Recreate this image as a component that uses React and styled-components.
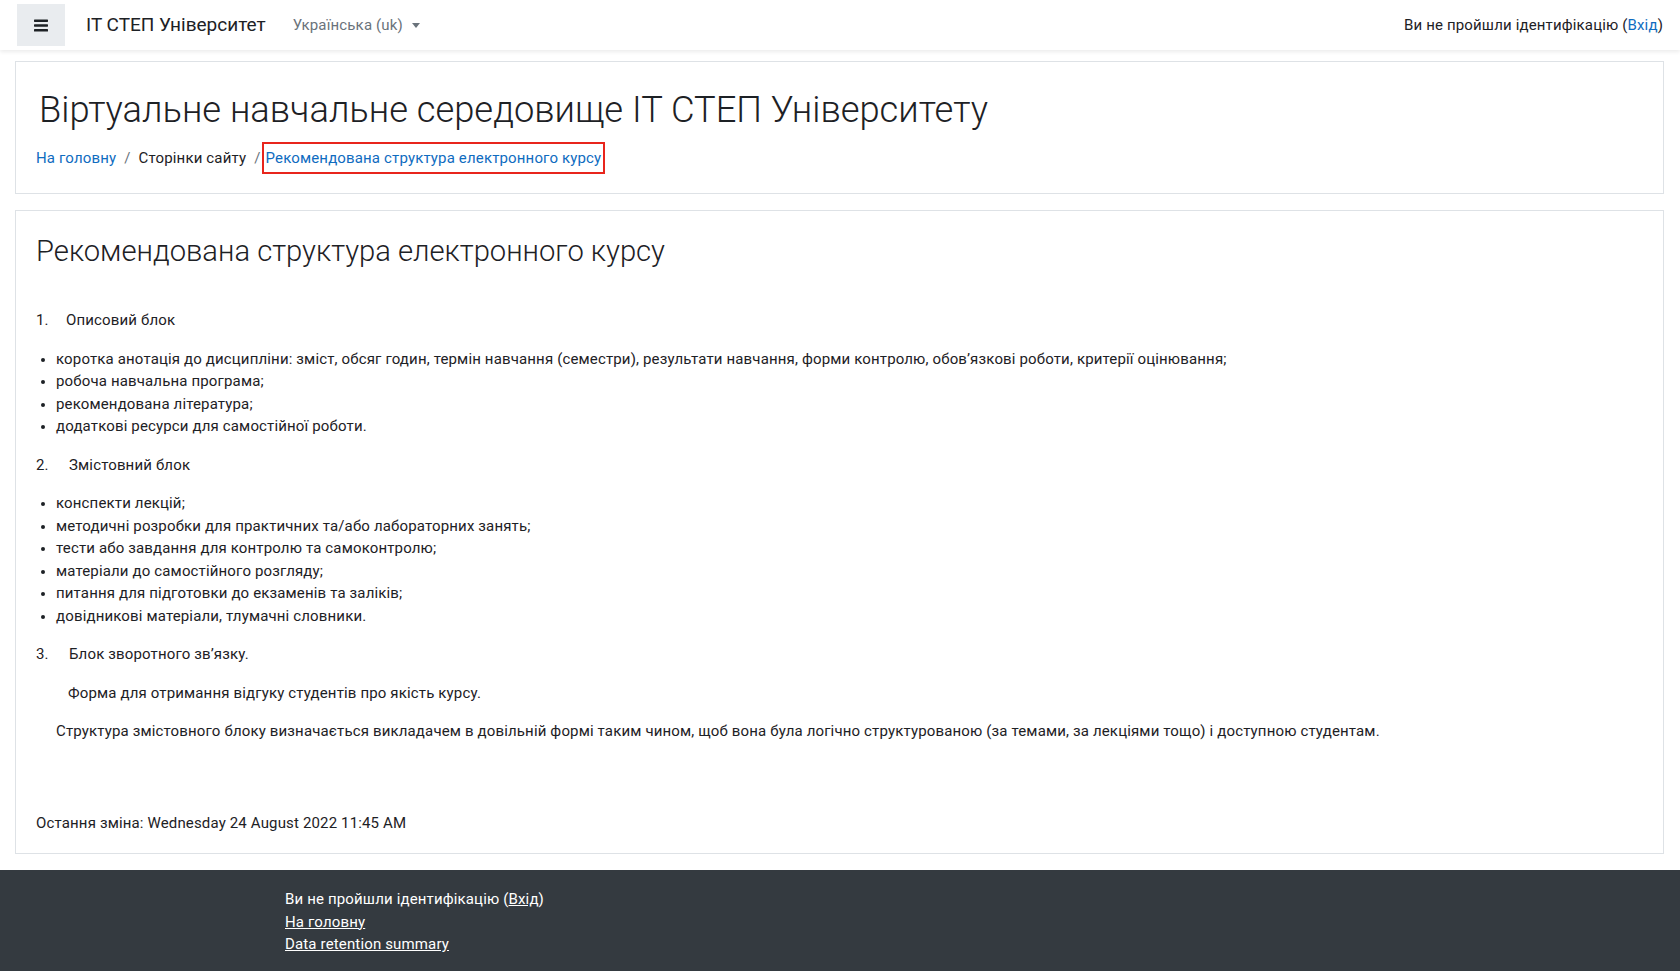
import React from "react";
import styled, { createGlobalStyle } from "styled-components";

const GlobalStyle = createGlobalStyle`
  body {
    margin: 0;
    padding: 0;
    background: #fff;
    font-family: Roboto, "Liberation Sans", sans-serif;
    font-size: 15px;
    line-height: 1.5;
    letter-spacing: 0.15px;
    color: #1d2125;
  }
`;

const bullets1 = [
  "коротка анотація до дисципліни: зміст, обсяг годин, термін навчання (семестри), результати навчання, форми контролю, обов’язкові роботи, критерії оцінювання;",
  "робоча навчальна програма;",
  "рекомендована література;",
  "додаткові ресурси для самостійної роботи.",
];

const bullets2 = [
  "конспекти лекцій;",
  "методичні розробки для практичних та/або лабораторних занять;",
  "тести або завдання для контролю та самоконтролю;",
  "матеріали до самостійного розгляду;",
  "питання для підготовки до екзаменів та заліків;",
  "довідникові матеріали, тлумачні словники.",
];

const BarsIcon = () => (
  <svg width="14" height="13" viewBox="0 0 14 13">
    <rect x="0" y="0.5" width="14" height="2.4" rx="0.6" fill="#1d2125" />
    <rect x="0" y="5.3" width="14" height="2.4" rx="0.6" fill="#1d2125" />
    <rect x="0" y="10.1" width="14" height="2.4" rx="0.6" fill="#1d2125" />
  </svg>
);

export default function App() {
  return (
    <>
      <GlobalStyle />
      <Navbar>
        <MenuButton>
          <BarsIcon />
        </MenuButton>
        <Brand>ІТ СТЕП Університет</Brand>
        <LangMenu>
          Українська (uk)
          <Caret />
        </LangMenu>
        <Spacer />
        <LoginInfo>
          Ви не пройшли ідентифікацію (<Link href="#">Вхід</Link>)
        </LoginInfo>
      </Navbar>

      <Page>
        <Card>
          <PageTitle>Віртуальне навчальне середовище ІТ СТЕП Університету</PageTitle>
          <Breadcrumb>
            <Link href="#">На головну</Link>
            <Sep>/</Sep>
            <span>Сторінки сайту</span>
            <Sep>/</Sep>
            <Current href="#">Рекомендована структура електронного курсу</Current>
          </Breadcrumb>
        </Card>

        <Card $main>
          <Heading>Рекомендована структура електронного курсу</Heading>

          <NumRow>
            <Num>1.</Num>
            <span>Описовий блок</span>
          </NumRow>
          <Bullets>
            {bullets1.map((b) => (
              <li key={b}>{b}</li>
            ))}
          </Bullets>

          <NumRow>
            <Num $wide>2.</Num>
            <span>Змістовний блок</span>
          </NumRow>
          <Bullets>
            {bullets2.map((b) => (
              <li key={b}>{b}</li>
            ))}
          </Bullets>

          <NumRow>
            <Num $wide>3.</Num>
            <span>Блок зворотного зв’язку.</span>
          </NumRow>
          <Para $indent={32}>Форма для отримання відгуку студентів про якість курсу.</Para>
          <Para $indent={20}>
            Структура змістовного блоку визначається викладачем в довільній формі таким чином, щоб вона
            була логічно структурованою (за темами, за лекціями тощо) і доступною студентам.
          </Para>

          <Modified>Остання зміна: Wednesday 24 August 2022 11:45 AM</Modified>
        </Card>
      </Page>

      <Footer>
        <FooterInner>
          <div>
            Ви не пройшли ідентифікацію (<FooterLink href="#">Вхід</FooterLink>)
          </div>
          <div>
            <FooterLink href="#">На головну</FooterLink>
          </div>
          <div>
            <FooterLink href="#">Data retention summary</FooterLink>
          </div>
        </FooterInner>
      </Footer>
    </>
  );
}

const Navbar = styled.nav`
  height: 50px;
  display: flex;
  align-items: center;
  padding: 0 17px;
  background: #fff;
  box-shadow: 0 2px 4px rgba(0, 0, 0, 0.08);
  position: relative;
  z-index: 1;
`;

const MenuButton = styled.button`
  width: 48px;
  height: 42px;
  border: none;
  border-radius: 0;
  background: #e9ecef;
  display: flex;
  align-items: center;
  justify-content: center;
  padding: 0;
  cursor: pointer;
`;

const Brand = styled.span`
  margin-left: 21px;
  font-size: 19px;
  letter-spacing: 0;
  color: #1d2125;
`;

const LangMenu = styled.span`
  margin-left: 27px;
  font-size: 15px;
  color: #6a737b;
  display: flex;
  align-items: center;
`;

const Caret = styled.span`
  margin-left: 9px;
  width: 0;
  height: 0;
  border-left: 4.5px solid transparent;
  border-right: 4.5px solid transparent;
  border-top: 5px solid #6a737b;
`;

const Spacer = styled.div`
  flex: 1;
`;

const LoginInfo = styled.span`
  font-size: 15px;
  color: #1d2125;
`;

const Link = styled.a`
  color: #0f6cbf;
  text-decoration: none;
`;

const Page = styled.main`
  padding: 11px 16px 16px 15px;
  display: flex;
  flex-direction: column;
  gap: 16px;
`;

const Card = styled.section`
  border: 1px solid #dee2e6;
  padding: ${({ $main }) => ($main ? "23px 20px 19px" : "26px 20px 24px")};
  box-sizing: border-box;
`;

const PageTitle = styled.h1`
  margin: 0 0 0 3px;
  font-size: 36.3px;
  font-weight: 300;
  line-height: 1.2;
  letter-spacing: 0;
  color: #1d2125;
`;

const Breadcrumb = styled.nav`
  margin-top: 15px;
  font-size: 15px;
`;

const Sep = styled.span`
  color: #6a737b;
  padding: 0 8px;
`;

const Current = styled(Link)`
  border: 2px solid #e8251c;
  padding: 5px 2px;
  margin-left: -7px;
`;

const Heading = styled.h2`
  margin: 0 0 40px;
  font-size: 29.2px;
  font-weight: 300;
  line-height: 1.2;
  letter-spacing: 0;
  color: #1d2125;
`;

const NumRow = styled.p`
  margin: 0 0 16px;
  display: flex;
`;

const Num = styled.span`
  width: ${({ $wide }) => ($wide ? "33px" : "30px")};
`;

const Bullets = styled.ul`
  margin: 0 0 16px;
  padding-left: 20px;

  li::marker {
    font-size: 13px;
  }
`;

const Para = styled.p`
  margin: 0 0 16px;
  padding-left: ${({ $indent }) => $indent}px;
`;

const Modified = styled.p`
  margin: 69px 0 0;
`;

const Footer = styled.footer`
  background: #343a40;
  color: #fff;
  padding: 18px 0 20px 285px;
  font-size: 15px;
  line-height: 1.5;
`;

const FooterInner = styled.div`
  display: flex;
  flex-direction: column;
`;

const FooterLink = styled.a`
  color: #fff;
  text-decoration: underline;
`;
